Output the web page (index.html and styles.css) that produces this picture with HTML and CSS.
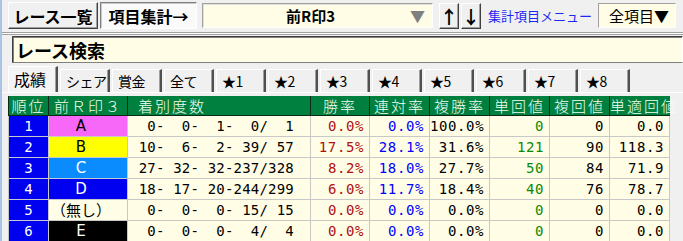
FILE: index.html
```html
<!DOCTYPE html>
<html lang="ja">
<head>
  <meta charset="UTF-8">
  <title>項目集計</title>
  <link rel="stylesheet" href="styles.css">
</head>
<body>
  <div class="app">
    <div class="toolbar">
      <button class="btn">レース一覧</button>
      <button class="btn pressed">項目集計→</button>
      <div class="combo"><span class="combo-text">前R印3</span><span class="combo-arrow">▼</span></div>
      <button class="btn arrow">↑</button>
      <button class="btn arrow">↓</button>
      <a class="menu-link" href="#">集計項目メニュー</a>
      <div class="allitems">全項目▼</div>
      <span class="cut">合</span>
    </div>
    <div class="sep"></div>
    <div class="search">レース検索</div>

    <div class="tabs">
      <span class="tab active">成績</span>
      <span class="tab">シェア</span>
      <span class="tab">賞金</span>
      <span class="tab">全て</span>
      <span class="tab">★1</span>
      <span class="tab">★2</span>
      <span class="tab">★3</span>
      <span class="tab">★4</span>
      <span class="tab">★5</span>
      <span class="tab">★6</span>
      <span class="tab">★7</span>
      <span class="tab">★8</span>
    </div>

    <table class="grid">
      <colgroup>
        <col class="c-rank"><col class="c-mark"><col class="c-count"><col class="c-rate">
        <col class="c-val"><col class="c-val"><col class="c-val"><col class="c-val">
        <col class="c-val"><col class="c-last">
      </colgroup>
      <thead>
        <tr>
          <th>順位</th><th>前Ｒ印３</th><th class="left">着別度数</th><th>勝率</th><th>連対率</th>
          <th>複勝率</th><th>単回値</th><th>複回値</th><th>単適回値</th>
        </tr>
      </thead>
      <tbody>
        <tr>
          <td class="rank">1</td><td class="mark m-pink">A</td>
          <td class="num count">0-&nbsp; 0-&nbsp; 1-&nbsp; 0/&nbsp; 1</td>
          <td class="num red">0.0%</td><td class="num blue">0.0%</td><td class="num">100.0%</td>
          <td class="num green">0</td><td class="num">0</td><td class="num">0.0</td>
        </tr>
        <tr>
          <td class="rank">2</td><td class="mark m-yellow">B</td>
          <td class="num count">10-&nbsp; 6-&nbsp; 2- 39/ 57</td>
          <td class="num red">17.5%</td><td class="num blue">28.1%</td><td class="num">31.6%</td>
          <td class="num green">121</td><td class="num">90</td><td class="num">118.3</td>
        </tr>
        <tr>
          <td class="rank">3</td><td class="mark m-sky">C</td>
          <td class="num count">27- 32- 32-237/328</td>
          <td class="num red">8.2%</td><td class="num blue">18.0%</td><td class="num">27.7%</td>
          <td class="num green">50</td><td class="num">84</td><td class="num">71.9</td>
        </tr>
        <tr>
          <td class="rank">4</td><td class="mark m-blue">D</td>
          <td class="num count">18- 17- 20-244/299</td>
          <td class="num red">6.0%</td><td class="num blue">11.7%</td><td class="num">18.4%</td>
          <td class="num green">40</td><td class="num">76</td><td class="num">78.7</td>
        </tr>
        <tr>
          <td class="rank">5</td><td class="mark m-none">（無し）</td>
          <td class="num count">0-&nbsp; 0-&nbsp; 0- 15/ 15</td>
          <td class="num red">0.0%</td><td class="num blue">0.0%</td><td class="num">0.0%</td>
          <td class="num green">0</td><td class="num">0</td><td class="num">0.0</td>
        </tr>
        <tr>
          <td class="rank">6</td><td class="mark m-black">E</td>
          <td class="num count">0-&nbsp; 0-&nbsp; 0-&nbsp; 4/&nbsp; 4</td>
          <td class="num red">0.0%</td><td class="num blue">0.0%</td><td class="num">0.0%</td>
          <td class="num green">0</td><td class="num">0</td><td class="num">0.0</td>
        </tr>
      </tbody>
    </table>
  </div>
</body>
</html>
```

FILE: styles.css
```css
/* Page frame */
html, body {
  margin: 0;
  padding: 0;
  overflow: hidden;
}

body {
  width: 683px;
  height: 241px;
  background: #f0f0f0;
  font-family: "Noto Sans CJK JP", sans-serif;
}

.app {
  border-left: 2px solid #a9c4e4;
  height: 241px;
  overflow: hidden;
}

/* Top button row */
.toolbar {
  display: flex;
  align-items: center;
  height: 31px;
  padding-left: 6px;
  white-space: nowrap;
}

.toolbar > * {
  flex-shrink: 0;
}

.btn {
  height: 27px;
  margin: 0 2px 0 0;
  padding: 0 6px;
  background: #f0f0f0;
  border: 1px solid;
  border-color: #ffffff #404040 #404040 #ffffff;
  box-shadow: inset -1px -1px #a0a0a0;
  font-family: "Noto Sans CJK JP", sans-serif;
  font-weight: bold;
  font-size: 16px;
  line-height: 20px;
  color: #000;
}

.btn:first-child {
  width: 90px;
  padding: 0;
}

.btn.pressed {
  width: 97px;
  padding: 0;
  background: #fafafa;
  border-color: #808080 #ffffff #ffffff #808080;
  box-shadow: inset 1px 1px #c8c8c8;
}

.combo {
  display: flex;
  align-items: center;
  width: 231px;
  height: 25px;
  margin-left: 3px;
  box-sizing: border-box;
  background: #fffde6;
  border: 1px solid;
  border-color: #a0a0a0 #ffffff #ffffff #a0a0a0;
  box-shadow: inset 1px 1px #e0e0e0;
}

.combo-text {
  flex: 1;
  text-align: center;
  padding-left: 8px;
  font-weight: bold;
  font-size: 15px;
}

.combo-arrow {
  width: 22px;
  color: #808080;
  font-size: 15px;
}

.btn.arrow {
  width: 20px;
  height: 26px;
  padding: 0;
  margin-left: 0;
  font-size: 18px;
}

.combo + .btn.arrow {
  margin-left: 6px;
}

.menu-link {
  margin-left: 5px;
  color: #1c28f0;
  text-decoration: none;
  font-size: 13px;
  letter-spacing: 0;
}

.allitems {
  width: 78px;
  height: 25px;
  box-sizing: border-box;
  margin-left: 6px;
  padding-left: 10px;
  background: #fffde6;
  border: 1px solid;
  border-color: #a0a0a0 #ffffff #ffffff #a0a0a0;
  font-size: 15px;
  line-height: 23px;
}

.cut {
  margin-left: 7px;
  font-size: 15px;
}

/* Double rule under the toolbar */
.sep {
  height: 1px;
  margin-top: 1px;
  border-top: 1px solid #a0a0a0;
  border-bottom: 1px solid #a0a0a0;
  background: #ffffff;
}

/* Search box */
.search {
  height: 25px;
  margin: 1px 0 0 10px;
  padding-left: 3px;
  background: #fffde6;
  border: 1px solid;
  border-color: #404040 #ffffff #808080 #404040;
  box-shadow: inset 1px 1px #808080;
  font-weight: bold;
  font-size: 18px;
  line-height: 26px;
}

/* Tab strip */
.tabs {
  display: flex;
  align-items: flex-end;
  height: 27px;
  margin-top: 2px;
  padding-left: 6px;
  border-bottom: 1px solid #ffffff;
}

.tab {
  width: 50px;
  height: 23px;
  margin-right: 2px;
  box-sizing: border-box;
  padding-left: 5px;
  background: #f0f0f0;
  border-top: 1px solid #ffffff;
  border-left: 1px solid #ffffff;
  border-right: 2px solid #505050;
  box-shadow: inset -1px 0 #a0a0a0;
  font-size: 14px;
  line-height: 22px;
  white-space: nowrap;
  letter-spacing: -0.5px;
}

.tab.active {
  height: 26px;
  font-size: 16px;
  background: #f4f4f4;
  line-height: 24px;
  letter-spacing: 0;
}

/* Result table */
.grid {
  margin: 3px 0 0 6px;
  table-layout: fixed;
  border-collapse: collapse;
  width: 741px;
}

.c-rank { width: 40px; }
.c-mark { width: 79px; }
.c-count { width: 183px; }
.c-rate { width: 59px; }
.c-val { width: 60px; }
.c-last { width: 80px; }

.grid th {
  height: 19px;
  padding: 0;
  background: #00803e;
  color: #f2fff2;
  font-weight: 300;
  font-size: 15px;
  letter-spacing: 2px;
  line-height: 19px;
  text-align: center;
  border-left: 1px solid #0c2a18;
  border-bottom: 1px solid #0c2a18;
  white-space: nowrap;
}

.grid th.left {
  text-align: left;
  padding-left: 10px;
}

.grid td {
  height: 20px;
  padding: 0;
  background: #fffde6;
  border: 1px solid #c8c8c8;
  font-size: 15px;
  line-height: 20px;
  white-space: nowrap;
  overflow: hidden;
}

.grid td.rank {
  background: #0000f0;
  color: #ffffff;
  text-align: center;
  font-family: "DejaVu Sans Mono", monospace;
  font-size: 14px;
}

.grid td.mark {
  text-align: center;
  padding-right: 14px;
  font-family: "DejaVu Sans", sans-serif;
  font-size: 15px;
}

.m-pink { background: #f868f8 !important; color: #000; }
.m-yellow { background: #ffff00 !important; color: #000; }
.m-sky { background: #0a8cff !important; color: #fff; }
.m-blue { background: #0000f0 !important; color: #fff; }
.m-none { color: #000; font-family: "Noto Sans CJK JP", sans-serif !important; }
.m-black { background: #000000 !important; color: #fff; }

.grid td.num {
  text-align: right;
  padding-right: 5px;
  font-family: "DejaVu Sans Mono", monospace;
  font-size: 14px;
  letter-spacing: 0.6px;
}

.grid td.count {
  padding-right: 16px;
  letter-spacing: 0.2px;
}

.red { color: #b01010; }
.blue { color: #0000ff; }
.green { color: #0a8a0a; }
```
